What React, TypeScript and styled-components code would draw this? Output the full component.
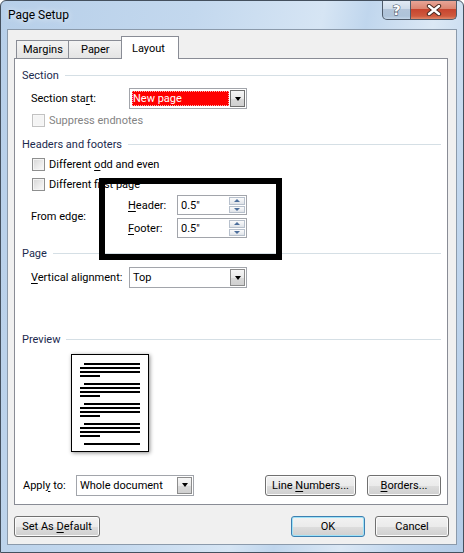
import React from "react";
import styled, { createGlobalStyle, css } from "styled-components";

const Global = createGlobalStyle`
  html, body { margin: 0; padding: 0; background: #ffffff; }
  body { font-family: Roboto, "Noto Sans", sans-serif; font-size: 11px; color: #000; }
  #root { width: 464px; height: 553px; }
`;

const Window = styled.div`
  width: 464px;
  height: 553px;
  box-sizing: border-box;
  display: flex;
  flex-direction: column;
  border: 1px solid #44505e;
  border-radius: 6px 6px 0 0;
  overflow: hidden;
  background: linear-gradient(
    100deg,
    #b7cfe9 0%,
    #c3d8ee 35%,
    #d6e5f4 58%,
    #c0d6ed 66%,
    #dbe8f5 78%,
    #c2d7ee 88%,
    #b4cce7 100%
  );
`;

const TitleBar = styled.div`
  height: 28px;
  display: flex;
  align-items: flex-start;
  flex-shrink: 0;
`;

const Title = styled.div`
  padding-left: 7px;
  line-height: 28px;
  font-size: 12px;
  color: #000;
  text-shadow: 0 0 6px rgba(255, 255, 255, 0.9);
`;

const CaptionButtons = styled.div`
  margin-left: auto;
  margin-right: 6px;
  margin-top: -1px;
  display: flex;
`;

const CaptionButton = styled.div<{ $close?: boolean }>`
  height: 20px;
  box-sizing: border-box;
  display: flex;
  align-items: center;
  justify-content: center;
  border: 1px solid #4f5b6a;
  border-top: none;
  ${(p) =>
    p.$close
      ? css`
          width: 46px;
          border-left: none;
          border-radius: 0 0 5px 0;
          background: linear-gradient(#e9a99c 0%, #dc8672 45%, #c7452f 50%, #cf5a3e 85%, #e08a6c 100%);
        `
      : css`
          width: 29px;
          border-radius: 0 0 0 5px;
          background: linear-gradient(#e3ecf6 0%, #cfdcea 45%, #b3c5da 50%, #aec3d9 85%, #c6d7e9 100%);
        `}
`;

const HelpGlyph = styled.span`
  font-family: "DejaVu Sans", sans-serif;
  font-weight: bold;
  font-size: 14px;
  line-height: 14px;
  color: #fff;
  -webkit-text-stroke: 1px #3d4b5c;
  paint-order: stroke fill;
`;

const Body = styled.div`
  flex: 1;
  padding: 0 6px 7px 6px;
  display: flex;
`;

const Client = styled.div`
  flex: 1;
  box-sizing: border-box;
  border: 1px solid #8b9aab;
  background: #f0f0f0;
  padding: 6px 8px 0 6px;
  display: flex;
  flex-direction: column;
`;

const TabStrip = styled.div`
  height: 22px;
  display: flex;
  align-items: flex-end;
  padding-left: 2px;
  position: relative;
  z-index: 1;
`;

const Tab = styled.div<{ $active?: boolean; $w: number; $pl: number }>`
  width: ${(p) => p.$w}px;
  box-sizing: border-box;
  border: 1px solid #898c95;
  border-bottom: none;
  margin-left: -1px;
  &:first-child { margin-left: 0; }
  padding-left: ${(p) => p.$pl}px;
  white-space: nowrap;
  line-height: 16px;
  ${(p) =>
    p.$active
      ? css`
          height: 23px;
          margin-bottom: -1px;
          padding-top: 4px;
          background: #ffffff;
        `
      : css`
          height: 18px;
          padding-top: 1px;
          background: linear-gradient(#f3f3f3 0%, #ececec 50%, #e4e4e4 100%);
        `}
`;

const Panel = styled.div`
  position: relative;
  height: 447px;
  box-sizing: border-box;
  border: 1px solid #898c95;
  background: #ffffff;
  padding: 0 6px 0 7px;
  display: flex;
  flex-direction: column;
`;

const Heading = styled.div<{ $mt: number }>`
  margin-top: ${(p) => p.$mt}px;
  height: 14px;
  display: flex;
  align-items: center;
  gap: 6px;
  color: #1b2a4e;
  white-space: nowrap;
  &::after {
    content: "";
    flex: 1;
    height: 1px;
    background: #d5dfe5;
  }
`;

const Row = styled.div<{ $mt: number; $h: number }>`
  margin-top: ${(p) => p.$mt}px;
  height: ${(p) => p.$h}px;
  display: flex;
  align-items: center;
  padding-left: 9px;
`;

const Label = styled.span<{ $w: number }>`
  width: ${(p) => p.$w}px;
  flex-shrink: 0;
  white-space: nowrap;
`;

const Key = styled.span`
  text-decoration: underline;
  text-underline-offset: 2px;
`;

const CheckRow = styled.label<{ $mt: number; $disabled?: boolean }>`
  margin-top: ${(p) => p.$mt}px;
  height: 13px;
  display: flex;
  align-items: center;
  gap: 4px;
  padding-left: 10px;
  color: ${(p) => (p.$disabled ? "#838383" : "#000")};
  white-space: nowrap;
`;

const CheckBox = styled.span<{ $disabled?: boolean }>`
  width: 13px;
  height: 13px;
  box-sizing: border-box;
  flex-shrink: 0;
  border: 1px solid ${(p) => (p.$disabled ? "#c2c2c2" : "#8e8f8f")};
  box-shadow: inset 0 0 0 1px ${(p) => (p.$disabled ? "#f7f7f7" : "#f4f4f4")};
  background: ${(p) =>
    p.$disabled ? "#f4f4f4" : "linear-gradient(135deg, #d5d5d5 0%, #ededed 60%, #fafafa 100%)"};
`;

const Select = styled.div<{ $w: number }>`
  width: ${(p) => p.$w}px;
  height: 21px;
  box-sizing: border-box;
  border: 1px solid #a2a5ab;
  background: #fff;
  display: flex;
  align-items: stretch;
  padding: 1px;
`;

const SelectValue = styled.div<{ $focused?: boolean }>`
  flex: 1;
  display: flex;
  align-items: center;
  padding-left: 2px;
  white-space: nowrap;
  ${(p) =>
    p.$focused &&
    css`
      margin: 1px;
      background: #ff0000;
      color: #ffffff;
      outline: 1px dotted #ffb0b0;
      outline-offset: -1px;
      padding-left: 1px;
    `}
`;

const DropButton = styled.div<{ $dark?: boolean }>`
  width: 15px;
  box-sizing: border-box;
  border: 1px solid ${(p) => (p.$dark ? "#6f6f6f" : "#8c8c8c")};
  background: linear-gradient(#f6f6f6 0%, #e9e9e9 50%, #d9d9d9 51%, #d0d0d0 100%);
  display: flex;
  align-items: center;
  justify-content: center;
  &::after {
    content: "";
    width: 0;
    height: 0;
    border-left: 3.5px solid transparent;
    border-right: 3.5px solid transparent;
    border-top: 4px solid #000;
  }
`;

const EdgeBlock = styled.div`
  margin-top: 4px;
  height: 43px;
  display: flex;
  align-items: center;
  padding-left: 9px;
`;

const EdgeFields = styled.div`
  display: flex;
  flex-direction: column;
  gap: 3px;
`;

const SpinRow = styled.div`
  height: 20px;
  display: flex;
  align-items: center;
`;

const SpinBox = styled.div`
  width: 70px;
  height: 20px;
  box-sizing: border-box;
  border: 1px solid #a2a5ab;
  background: #fff;
  display: flex;
  padding: 1px;
`;

const SpinText = styled.div`
  flex: 1;
  display: flex;
  align-items: center;
  padding-left: 2px;
`;

const SpinButtons = styled.div`
  width: 16px;
  display: flex;
  flex-direction: column;
  gap: 1px;
`;

const SpinButton = styled.div<{ $down?: boolean }>`
  flex: 1;
  box-sizing: border-box;
  border: 1px solid #b7c0cc;
  background: linear-gradient(#fbfbfb 0%, #eef0f3 50%, #dfe3e8 100%);
  display: flex;
  align-items: center;
  justify-content: center;
  &::after {
    content: "";
    width: 0;
    height: 0;
    border-left: 3px solid transparent;
    border-right: 3px solid transparent;
    ${(p) =>
      p.$down
        ? css`border-top: 3px solid #4d6f9c;`
        : css`border-bottom: 3px solid #4d6f9c;`}
  }
`;

const PreviewPage = styled.div`
  margin-top: 8px;
  margin-left: 49px;
  width: 78px;
  height: 98px;
  box-sizing: border-box;
  border: 1px solid #000;
  background: #fff;
  box-shadow: 1px 1px 4px rgba(0, 0, 0, 0.45);
  flex-shrink: 0;
`;

const ApplyRow = styled.div`
  margin-top: 22px;
  height: 22px;
  display: flex;
  align-items: center;
  padding-left: 1px;
`;

const ButtonGroup = styled.div<{ $gap: number }>`
  margin-left: auto;
  display: flex;
  gap: ${(p) => p.$gap}px;
`;

const Button = styled.div<{ $w: number; $default?: boolean }>`
  width: ${(p) => p.$w}px;
  height: 21px;
  box-sizing: border-box;
  border: 1px solid ${(p) => (p.$default ? "#3c7fb1" : "#707070")};
  border-radius: 3px;
  box-shadow: inset 0 0 0 1px ${(p) => (p.$default ? "#9fe2f7" : "#fbfbfb")};
  background: linear-gradient(#f2f2f2 0%, #ebebeb 50%, #dddddd 51%, #cfcfcf 100%);
  display: flex;
  align-items: center;
  justify-content: center;
  white-space: nowrap;
`;

const Footer = styled.div`
  margin-top: 11px;
  margin-right: -1px;
  display: flex;
  align-items: center;
`;

const Highlight = styled.div`
  position: absolute;
  left: 84px;
  top: 119px;
  width: 183px;
  height: 82px;
  box-sizing: border-box;
  border: 6px solid #000;
  pointer-events: none;
`;

const previewGroups = [8, 28, 48, 68];

function PreviewLines() {
  return (
    <svg width="76" height="96" viewBox="0 0 76 96" style={{ display: "block" }}>
      {previewGroups.map((y) => (
        <g key={y} fill="#000">
          <rect x="12" y={y} width="56" height="2" />
          <rect x="8" y={y + 4} width="60" height="2" />
          <rect x="8" y={y + 8} width="60" height="2" />
          <rect x="8" y={y + 12} width="20" height="2" />
        </g>
      ))}
      <rect x="12" y="88" width="56" height="2" fill="#000" />
    </svg>
  );
}

function CloseGlyph() {
  return (
    <svg width="18" height="12" viewBox="0 0 18 12">
      <path d="M4 2 L14 10 M14 2 L4 10" stroke="#4a2a22" strokeWidth="4.4" strokeLinecap="round" />
      <path d="M4 2 L14 10 M14 2 L4 10" stroke="#ffffff" strokeWidth="2.4" strokeLinecap="round" />
    </svg>
  );
}

export default function App() {
  return (
    <>
      <Global />
      <Window>
        <TitleBar>
          <Title>Page Setup</Title>
          <CaptionButtons>
            <CaptionButton>
              <HelpGlyph>?</HelpGlyph>
            </CaptionButton>
            <CaptionButton $close>
              <CloseGlyph />
            </CaptionButton>
          </CaptionButtons>
        </TitleBar>
        <Body>
          <Client>
            <TabStrip>
              <Tab $w={53} $pl={6}>Margins</Tab>
              <Tab $w={54} $pl={12}>Paper</Tab>
              <Tab $active $w={58} $pl={10}>Layout</Tab>
            </TabStrip>
            <Panel>
              <Heading $mt={9}>Section</Heading>
              <Row $mt={6} $h={21}>
                <Label $w={98}>
                  Section sta<Key>r</Key>t:
                </Label>
                <Select $w={118}>
                  <SelectValue $focused>New page</SelectValue>
                  <DropButton $dark />
                </Select>
              </Row>
              <CheckRow $mt={5} $disabled>
                <CheckBox $disabled />
                <span>Suppress endnotes</span>
              </CheckRow>

              <Heading $mt={10}>Headers and footers</Heading>
              <CheckRow $mt={7}>
                <CheckBox />
                <span>
                  Different <Key>o</Key>dd and even
                </span>
              </CheckRow>
              <CheckRow $mt={7}>
                <CheckBox />
                <span>
                  Different f<Key>i</Key>rst page
                </span>
              </CheckRow>
              <EdgeBlock>
                <Label $w={97}>From edge:</Label>
                <EdgeFields>
                  <SpinRow>
                    <Label $w={49}>
                      <Key>H</Key>eader:
                    </Label>
                    <SpinBox>
                      <SpinText>0.5"</SpinText>
                      <SpinButtons>
                        <SpinButton />
                        <SpinButton $down />
                      </SpinButtons>
                    </SpinBox>
                  </SpinRow>
                  <SpinRow>
                    <Label $w={49}>
                      <Key>F</Key>ooter:
                    </Label>
                    <SpinBox>
                      <SpinText>0.5"</SpinText>
                      <SpinButtons>
                        <SpinButton />
                        <SpinButton $down />
                      </SpinButtons>
                    </SpinBox>
                  </SpinRow>
                </EdgeFields>
              </EdgeBlock>

              <Heading $mt={8}>Page</Heading>
              <Row $mt={7} $h={21}>
                <Label $w={98}>
                  <Key>V</Key>ertical alignment:
                </Label>
                <Select $w={118}>
                  <SelectValue>Top</SelectValue>
                  <DropButton />
                </Select>
              </Row>

              <Heading $mt={44}>Preview</Heading>
              <PreviewPage>
                <PreviewLines />
              </PreviewPage>

              <ApplyRow>
                <Label $w={53}>
                  Appl<Key>y</Key> to:
                </Label>
                <Select $w={118}>
                  <SelectValue>Whole document</SelectValue>
                  <DropButton />
                </Select>
                <ButtonGroup $gap={11}>
                  <Button $w={91}>
                    <span>
                      Line <Key>N</Key>umbers...
                    </span>
                  </Button>
                  <Button $w={74}>
                    <span>
                      <Key>B</Key>orders...
                    </span>
                  </Button>
                </ButtonGroup>
              </ApplyRow>

              <Highlight />
            </Panel>
            <Footer>
              <Button $w={86}>
                <span>
                  Set As <Key>D</Key>efault
                </span>
              </Button>
              <ButtonGroup $gap={10}>
                <Button $w={74} $default>
                  <span>OK</span>
                </Button>
                <Button $w={74}>
                  <span>Cancel</span>
                </Button>
              </ButtonGroup>
            </Footer>
          </Client>
        </Body>
      </Window>
    </>
  );
}
